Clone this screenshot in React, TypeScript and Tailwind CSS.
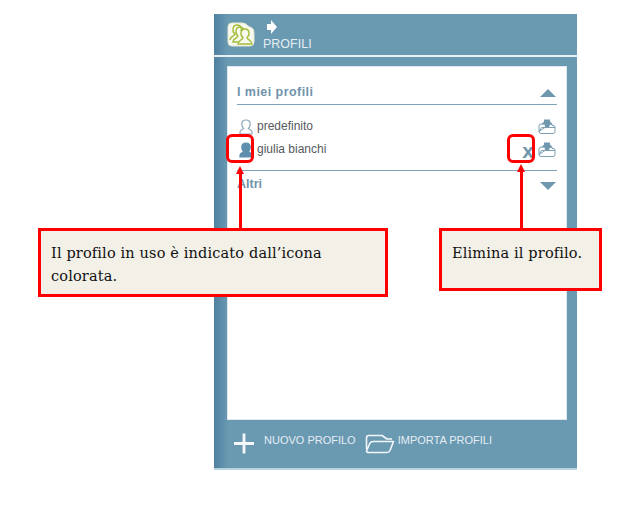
import React from 'react';

function IconaProfili() {
  return (
    <svg width="28" height="25" viewBox="0 0 28 25" fill="none" className="mt-[2px]">
      <path d="M1 5 Q1 1 5 1 L15 1 Q19 1 21 4 L25 6 Q27 7 27 11 L27 20 Q27 24 23 24 L5 24 Q1 24 1 20 Z" fill="#f8f8ee" stroke="#e6e8d0" />
      <g stroke="#a3bf3a" strokeWidth="1.4">
        <path d="M3 18 C3 14 8 14 8 12 C5 10 5 3 10 3 C14 3 15 6 14 9" />
        <path d="M6 20 C6 16 11 16 11 14 C8 12 8 5 13 5 C17 5 18 11 15 14 C15 16 20 16 20 20 Z" />
        <path d="M11 22 C11 18 16 18 16 15.5 C13 13.5 13 7 18 7 C23 7 23 13.5 20 15.5 C20 18 25 18 25 22 Z" fill="#f8f8ee" />
      </g>
    </svg>
  );
}

function Persona({ piena }: { piena?: boolean }) {
  return (
    <svg width="14" height="16" viewBox="0 0 14 16" fill={piena ? '#5f8fae' : 'none'} stroke={piena ? '#5f8fae' : '#8fa9ba'} strokeWidth="1.2">
      <path d="M1 15 L1 13 C1 11 4 10.5 4.6 9.5 C3.2 8.5 2.8 7 2.8 5 C2.8 2.5 4.6 1 7 1 C9.4 1 11.2 2.5 11.2 5 C11.2 7 10.8 8.5 9.4 9.5 C10 10.5 13 11 13 13 L13 15 Z" />
    </svg>
  );
}

function Esporta() {
  return (
    <svg width="18" height="15" viewBox="0 0 18 15" fill="none">
      <path d="M1 12.5 L1 7 Q1 5 3 5 L5 5 M12 5 L13 5 L14 6.5 L15 6.5 Q17 6.5 17 8 L17 12.5 Q17 14.5 15 14.5 L3 14.5 Q1 14.5 1 12.5 Z M1 12.5 L3.5 8.5 L17 8.5" stroke="#7fa1b5" strokeWidth="1" />
      <path d="M3.5 5.5 L6 2.5 L6 0.5 L12 0.5 L12 2.5 L15 5.5 L12 5.5 L11 8 L7 8 L6.5 5.5 Z" fill="#6f97ad" />
    </svg>
  );
}

function Riga({ nome, piena, elimina }: { nome: string; piena?: boolean; elimina?: boolean }) {
  return (
    <div className="h-[23px] flex items-center">
      <div className="w-5 flex justify-start pl-[2px] shrink-0">
        <Persona piena={piena} />
      </div>
      <span className="mt-[-2px] text-[12px] text-[#55595d]">{nome}</span>
      <div className="ml-auto mr-[1px] flex items-center">
        {elimina && <span className="mr-[4px] mt-[1px] text-[21px] font-bold leading-none text-[#6f97ad]">x</span>}
        <Esporta />
      </div>
    </div>
  );
}

function Box({ cls, children }: { cls: string; children: React.ReactNode }) {
  return (
    <div className={`absolute border-[3px] border-[#fe0000] bg-[#f3f0e8] text-[14.5px] tracking-[0.15px] leading-[23px] text-[#111] font-['DejaVu_Serif',serif] ${cls}`}>
      {children}
    </div>
  );
}

export default function App() {
  return (
    <div className="relative w-[633px] h-[518px] bg-white pl-[214px] pt-[14px] font-['Liberation_Sans',sans-serif] overflow-hidden">
      <div className="w-[363px] h-[456px] flex flex-col bg-[linear-gradient(90deg,#4f82a0_0px,#6a99b2_14px)] border-b-2 border-[#b9d3e0]">
        <header className="h-[43px] shrink-0 border-b-2 border-[#e8f0f4] flex pl-[13px] pt-[6px]">
          <IconaProfili />
          <div className="ml-[8px] flex flex-col items-start">
            <svg width="12" height="14" viewBox="0 0 12 14" className="ml-[3px]">
              <path d="M1 4 L5 4 L5 0 L11 7 L5 14 L5 10 L1 10 Z" fill="#fff" />
            </svg>
            <span className="text-[12.5px] leading-[14px] mt-[3px] text-[#e4edf2]">PROFILI</span>
          </div>
        </header>
        <div className="flex-1 mt-[9px] ml-[13px] mr-[10px] bg-white border border-[#dfe8ee] px-[9px] pt-[17px] min-h-0">
          <div className="h-[21px] border-b border-[#7fa3b9] flex items-start justify-between">
            <span className="text-[12.5px] leading-[16px] font-bold text-[#7193ac] tracking-[0.45px]">I miei profili</span>
            <svg width="16" height="8" viewBox="0 0 16 8" className="mt-[5px] mr-[1px]"><path d="M8 0 L16 8 L0 8 Z" fill="#6f97ad" /></svg>
          </div>
          <div className="pt-[10px] pb-[9px] border-b border-[#7fa3b9]">
            <Riga nome="predefinito" />
            <Riga nome="giulia bianchi" piena elimina />
          </div>
          <div className="h-[26px] flex items-center justify-between">
            <span className="text-[12.5px] font-bold text-[#7193ac]">Altri</span>
            <svg width="16" height="8" viewBox="0 0 16 8" className="mt-[3px] mr-[1px]"><path d="M0 0 L16 0 L8 8 Z" fill="#6f97ad" /></svg>
          </div>
        </div>
        <footer className="h-[48px] shrink-0 flex items-start pl-[20px] pt-[13px] text-[11px] text-[#e4edf2]">
          <svg width="20" height="21" viewBox="0 0 21 21"><path d="M9 0 H12 V9 H21 V12 H12 V21 H9 V12 H0 V9 H9 Z" fill="#f4f7f9" /></svg>
          <span className="ml-[10px] leading-[14px]">NUOVO PROFILO</span>
          <svg width="30" height="20" viewBox="0 0 30 20" fill="none" className="ml-[9px] mt-[1px]" stroke="#f4f7f9" strokeWidth="1.6" strokeLinejoin="round">
            <path d="M1.5 15 L1.5 4 Q1.5 1.5 4 1.5 L17 1.5 L22 5 L27 5" />
            <path d="M1.5 17 Q1.5 18.5 4 18.5 L22 18.5 Q24 18.5 25 16.5 L28.5 7.5 L8 7.5 Q5.5 7.5 4.5 10 Z" />
          </svg>
          <span className="ml-[3px] leading-[14px]">IMPORTA PROFILI</span>
        </footer>
      </div>

      {/* annotazioni */}
      <div className="absolute left-[226px] top-[134px] w-[28px] h-[29px] border-[3px] border-[#fe0000] rounded-[6px]" />
      <div className="absolute left-[507px] top-[134px] w-[28px] h-[29px] border-[3px] border-[#fe0000] rounded-[6px]" />
      <div className="absolute left-[239px] top-[172px] w-[3px] h-[58px] bg-[#fe0000]" />
      <div className="absolute left-[236px] top-[166px] border-x-[4.5px] border-x-transparent border-b-[8px] border-b-[#fe0000]" />
      <div className="absolute left-[520px] top-[170px] w-[3px] h-[60px] bg-[#fe0000]" />
      <div className="absolute left-[517px] top-[164px] border-x-[4.5px] border-x-transparent border-b-[8px] border-b-[#fe0000]" />
      <Box cls="left-[38px] top-[228px] w-[350px] h-[69px] pl-[10px] pt-[11px]">
        Il profilo in uso è indicato dall’icona<br />colorata.
      </Box>
      <Box cls="left-[439px] top-[228px] w-[163px] h-[63px] pl-[10px] pt-[11px]">Elimina il profilo.</Box>
    </div>
  );
}
